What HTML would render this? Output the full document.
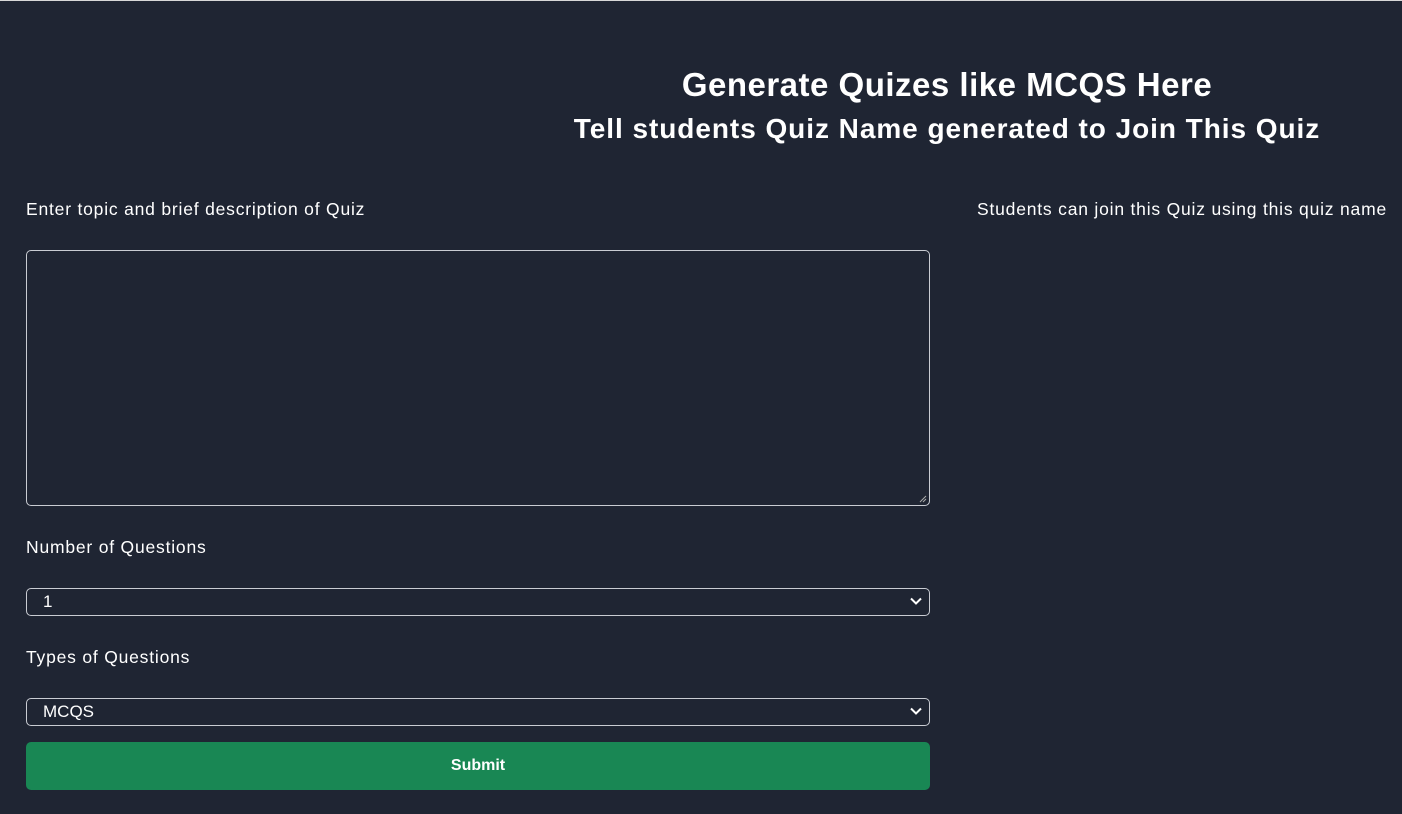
<!DOCTYPE html>
<html><head><style>
html,body{margin:0;padding:0;}
body{width:1402px;height:814px;background:#1f2533;position:relative;overflow:hidden;font-family:"Liberation Sans",sans-serif;color:#fff;}
.top{position:absolute;left:0;top:0;width:1402px;height:1px;background:#d8d8d8;}
.a{position:absolute;white-space:nowrap;}
h1{position:absolute;margin:0;left:494px;width:906px;text-align:center;font-weight:bold;}
.lbl{font-size:17.5px;letter-spacing:0.8px;}
.box{position:absolute;left:26px;width:902px;border:1px solid #c9ccd3;border-radius:5px;}
.sel{height:26px;font-size:17px;line-height:26px;}
.sel span{position:absolute;left:16px;}
.sel svg{position:absolute;right:7px;top:8px;}
</style></head><body>
<div class="top"></div>
<h1 style="top:66px;font-size:33px;letter-spacing:0.5px;">Generate Quizes like MCQS Here</h1>
<h1 style="top:113px;font-size:28px;letter-spacing:0.95px;">Tell students Quiz Name generated to Join This Quiz</h1>
<div class="a lbl" style="left:26px;top:199px;">Enter topic and brief description of Quiz</div>
<div class="a lbl" style="left:977px;top:199px;">Students can join this Quiz using this quiz name</div>
<div class="box" style="top:250px;height:254px;">
<svg width="10" height="10" style="position:absolute;right:2px;bottom:2px"><path d="M9 3L3 9M9 6L6 9" stroke="#aaa" stroke-width="1"/></svg>
</div>
<div class="a lbl" style="left:26px;top:537px;">Number of Questions</div>
<div class="box sel" style="top:588px;"><span>1</span><svg width="12" height="8"><path d="M1 1.5L6 6.5L11 1.5" fill="none" stroke="#fff" stroke-width="2"/></svg></div>
<div class="a lbl" style="left:26px;top:647px;">Types of Questions</div>
<div class="box sel" style="top:698px;"><span>MCQS</span><svg width="12" height="8"><path d="M1 1.5L6 6.5L11 1.5" fill="none" stroke="#fff" stroke-width="2"/></svg></div>
<div class="a" style="left:26px;top:742px;width:904px;height:48px;background:#198754;border-radius:5px;text-align:center;line-height:48px;font-size:16px;font-weight:bold;">Submit</div>
</body></html>
